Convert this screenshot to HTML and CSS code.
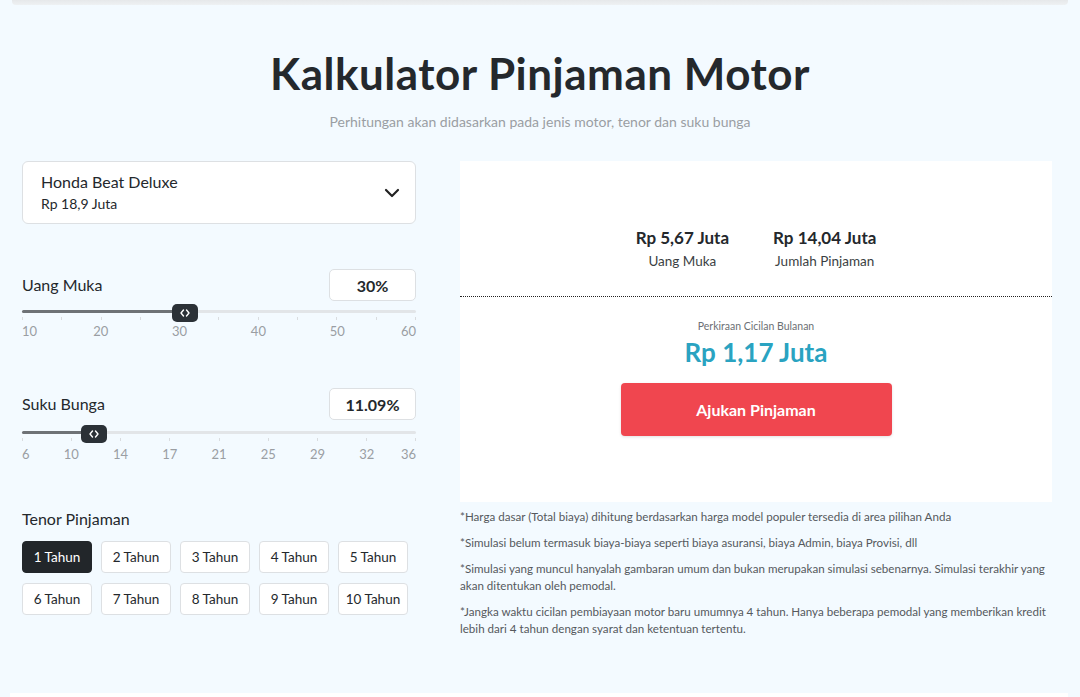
FILE: index.html
```html
<!DOCTYPE html>
<html lang="id">
<head>
<meta charset="utf-8">
<title>Kalkulator Pinjaman Motor</title>
<link rel="stylesheet" href="styles.css">
</head>
<body>
<div class="topbar"></div>
<main class="page">
  <h1 class="title">Kalkulator Pinjaman Motor</h1>
  <p class="subtitle">Perhitungan akan didasarkan pada jenis motor, tenor dan suku bunga</p>
  <div class="layout">
    <section class="left">
      <div class="select">
        <div class="select-text">
          <div class="select-name">Honda Beat Deluxe</div>
          <div class="select-price">Rp 18,9 Juta</div>
        </div>
        <svg class="chev" width="16" height="10" viewBox="0 0 16 10"><path d="M2 2l6 6 6-6" fill="none" stroke="#222" stroke-width="2.2" stroke-linecap="round" stroke-linejoin="round"/></svg>
      </div>

      <div class="field field-dp">
        <div class="field-head">
          <span class="field-label">Uang Muka</span>
          <span class="field-value">30%</span>
        </div>
        <div class="slider">
          <div class="track"><div class="fill" style="width:41.4%"></div>
            <div class="thumb" style="left:41.4%"><svg width="10" height="8" viewBox="0 0 10 8"><path d="M3.5 1L1 4l2.5 3M6.5 1L9 4 6.5 7" fill="none" stroke="#fff" stroke-width="1.4" stroke-linecap="round" stroke-linejoin="round"/></svg></div>
          </div>
          <div class="ticks"><i></i><i></i><i></i><i></i><i></i><i></i><i></i><i></i><i></i><i></i><i></i></div>
          <div class="labels"><span>10</span><span>20</span><span>30</span><span>40</span><span>50</span><span>60</span></div>
        </div>
      </div>

      <div class="field field-rate">
        <div class="field-head">
          <span class="field-label">Suku Bunga</span>
          <span class="field-value">11.09%</span>
        </div>
        <div class="slider">
          <div class="track"><div class="fill" style="width:18.3%"></div>
            <div class="thumb" style="left:18.3%"><svg width="10" height="8" viewBox="0 0 10 8"><path d="M3.5 1L1 4l2.5 3M6.5 1L9 4 6.5 7" fill="none" stroke="#fff" stroke-width="1.4" stroke-linecap="round" stroke-linejoin="round"/></svg></div>
          </div>
          <div class="ticks"><i></i><i></i><i></i><i></i><i></i><i></i><i></i><i></i><i></i></div>
          <div class="labels"><span>6</span><span>10</span><span>14</span><span>17</span><span>21</span><span>25</span><span>29</span><span>32</span><span>36</span></div>
        </div>
      </div>

      <div class="tenor">
        <div class="field-label">Tenor Pinjaman</div>
        <div class="tenor-grid">
          <button class="tenor-btn active">1 Tahun</button>
          <button class="tenor-btn">2 Tahun</button>
          <button class="tenor-btn">3 Tahun</button>
          <button class="tenor-btn">4 Tahun</button>
          <button class="tenor-btn">5 Tahun</button>
          <button class="tenor-btn">6 Tahun</button>
          <button class="tenor-btn">7 Tahun</button>
          <button class="tenor-btn">8 Tahun</button>
          <button class="tenor-btn">9 Tahun</button>
          <button class="tenor-btn">10 Tahun</button>
        </div>
      </div>
    </section>

    <section class="right">
      <div class="card">
        <div class="summary">
          <div class="sum-item">
            <div class="sum-value">Rp 5,67 Juta</div>
            <div class="sum-label">Uang Muka</div>
          </div>
          <div class="sum-item">
            <div class="sum-value">Rp 14,04 Juta</div>
            <div class="sum-label">Jumlah Pinjaman</div>
          </div>
        </div>
        <div class="result">
          <div class="result-label">Perkiraan Cicilan Bulanan</div>
          <div class="result-value">Rp 1,17 Juta</div>
          <button class="apply">Ajukan Pinjaman</button>
        </div>
      </div>
      <div class="notes">
        <p>*Harga dasar (Total biaya) dihitung berdasarkan harga model populer tersedia di area pilihan Anda</p>
        <p>*Simulasi belum termasuk biaya-biaya seperti biaya asuransi, biaya Admin, biaya Provisi, dll</p>
        <p>*Simulasi yang muncul hanyalah gambaran umum dan bukan merupakan simulasi sebenarnya. Simulasi terakhir yang akan ditentukan oleh pemodal.</p>
        <p>*Jangka waktu cicilan pembiayaan motor baru umumnya 4 tahun. Hanya beberapa pemodal yang memberikan kredit lebih dari 4 tahun dengan syarat dan ketentuan tertentu.</p>
      </div>
    </section>
  </div>
</main>
<div class="bottom-strip"></div>
</body>
</html>
```

FILE: styles.css
```css
* { box-sizing: border-box; }
html, body { margin: 0; padding: 0; }
body {
  background: #f3faff;
  font-family: "Lato", "Noto Sans", sans-serif;
  color: #24282c;
  height: 697px;
  overflow: hidden;
  position: relative;
}
.topbar {
  height: 5px;
  margin: 0 12px;
  background: linear-gradient(#e6e8ea, #eef1f3);
  border-radius: 0 0 4px 4px;
}
.page {
  padding: 0 22px;
}
.title {
  margin: 41px 0 0;
  text-align: center;
  font-size: 44px;
  line-height: 54px;
  font-weight: 700;
  color: #24282c;
  letter-spacing: 0.5px;
}
.subtitle {
  margin: 13px 0 0;
  text-align: center;
  font-size: 14px;
  line-height: 18px;
  color: #9a9ea3;
}
.layout {
  margin-top: 30px;
  display: flex;
  gap: 44px;
}
.left { width: 394px; flex: none; }
.right { width: 592px; flex: none; }

.select {
  height: 63px;
  background: #fff;
  border: 1px solid #dde0e3;
  border-radius: 6px;
  padding: 0 15px 0 18px;
  display: flex;
  align-items: center;
  justify-content: space-between;
}
.select-name { font-size: 16px; line-height: 20px; color: #24282c; }
.select-price { font-size: 14px; line-height: 18px; margin-top: 3px; color: #24282c; }

.field { margin-top: 45px; }
.field-rate { margin-top: 49px; }
.field-head {
  display: flex;
  align-items: center;
  justify-content: space-between;
}
.field-label { font-size: 16px; line-height: 20px; color: #24282c; }
.field-value {
  width: 87px;
  height: 32px;
  background: #fff;
  border: 1px solid #dde0e3;
  border-radius: 5px;
  font-size: 16px;
  font-weight: 700;
  display: flex;
  align-items: center;
  justify-content: center;
}
.slider { margin-top: 9px; }
.field-rate .slider { margin-top: 11px; }
.track {
  position: relative;
  height: 3px;
  background: #e2e5e8;
  border-radius: 2px;
}
.fill {
  height: 3px;
  background: #6e7276;
  border-radius: 2px;
}
.thumb {
  position: absolute;
  top: 50%;
  width: 26px;
  height: 18px;
  margin-left: -13px;
  margin-top: -8px;
  background: #2b3137;
  border-radius: 5px;
  display: flex;
  align-items: center;
  justify-content: center;
}
.ticks {
  display: flex;
  justify-content: space-between;
  margin-top: 4px;
  height: 4px;
}
.ticks i {
  width: 1px;
  height: 3px;
  background: #d9dcdf;
}
.labels {
  display: flex;
  justify-content: space-between;
  margin-top: 2px;
  font-size: 13px;
  line-height: 16px;
  color: #9a9ea3;
}
.field-rate .labels { margin-top: 4px; }
.labels span { width: 0; display: flex; justify-content: center; white-space: nowrap; }
.labels span:first-child { justify-content: flex-start; }
.labels span:last-child { justify-content: flex-end; }

.tenor { margin-top: 47px; }
.tenor-grid {
  margin-top: 12px;
  display: grid;
  grid-template-columns: repeat(5, 70px);
  column-gap: 9px;
  row-gap: 10px;
}
.tenor-btn {
  height: 32px;
  background: #fff;
  border: 1px solid #dde0e3;
  border-radius: 4px;
  font-family: inherit;
  font-size: 13.5px;
  color: #24282c;
  padding: 0;
}
.tenor-btn.active {
  background: #22262a;
  border-color: #22262a;
  color: #fff;
}

.card {
  background: #fff;
  height: 341px;
  display: flex;
  flex-direction: column;
}
.summary {
  height: 136px;
  border-bottom: 1px dotted #222;
  display: flex;
  justify-content: center;
  gap: 44px;
  padding-top: 66px;
}
.sum-item { text-align: center; }
.sum-value { font-size: 17px; line-height: 22px; font-weight: 700; color: #24282c; }
.sum-label { font-size: 13.5px; line-height: 18px; margin-top: 3px; color: #3b3f43; }
.result {
  display: flex;
  flex-direction: column;
  align-items: center;
  padding-top: 22px;
}
.result-label { font-size: 10.5px; line-height: 14px; color: #6c7074; }
.result-value {
  font-size: 26px;
  line-height: 32px;
  font-weight: 700;
  color: #2aa3c1;
  margin-top: 3px;
}
.apply {
  margin-top: 15px;
  width: 271px;
  height: 53px;
  background: #f0464f;
  border: none;
  border-radius: 4px;
  color: #fff;
  font-family: inherit;
  font-size: 16px;
  font-weight: 700;
  box-shadow: 0 1px 3px rgba(0,0,0,0.12);
}
.notes { margin-top: 6px; }
.notes p {
  margin: 0 0 9px;
  font-size: 11.6px;
  line-height: 17px;
  color: #55595d;
}
.bottom-strip {
  position: absolute;
  left: 10px;
  right: 12px;
  bottom: 0;
  height: 4px;
  background: #fff;
}
```
